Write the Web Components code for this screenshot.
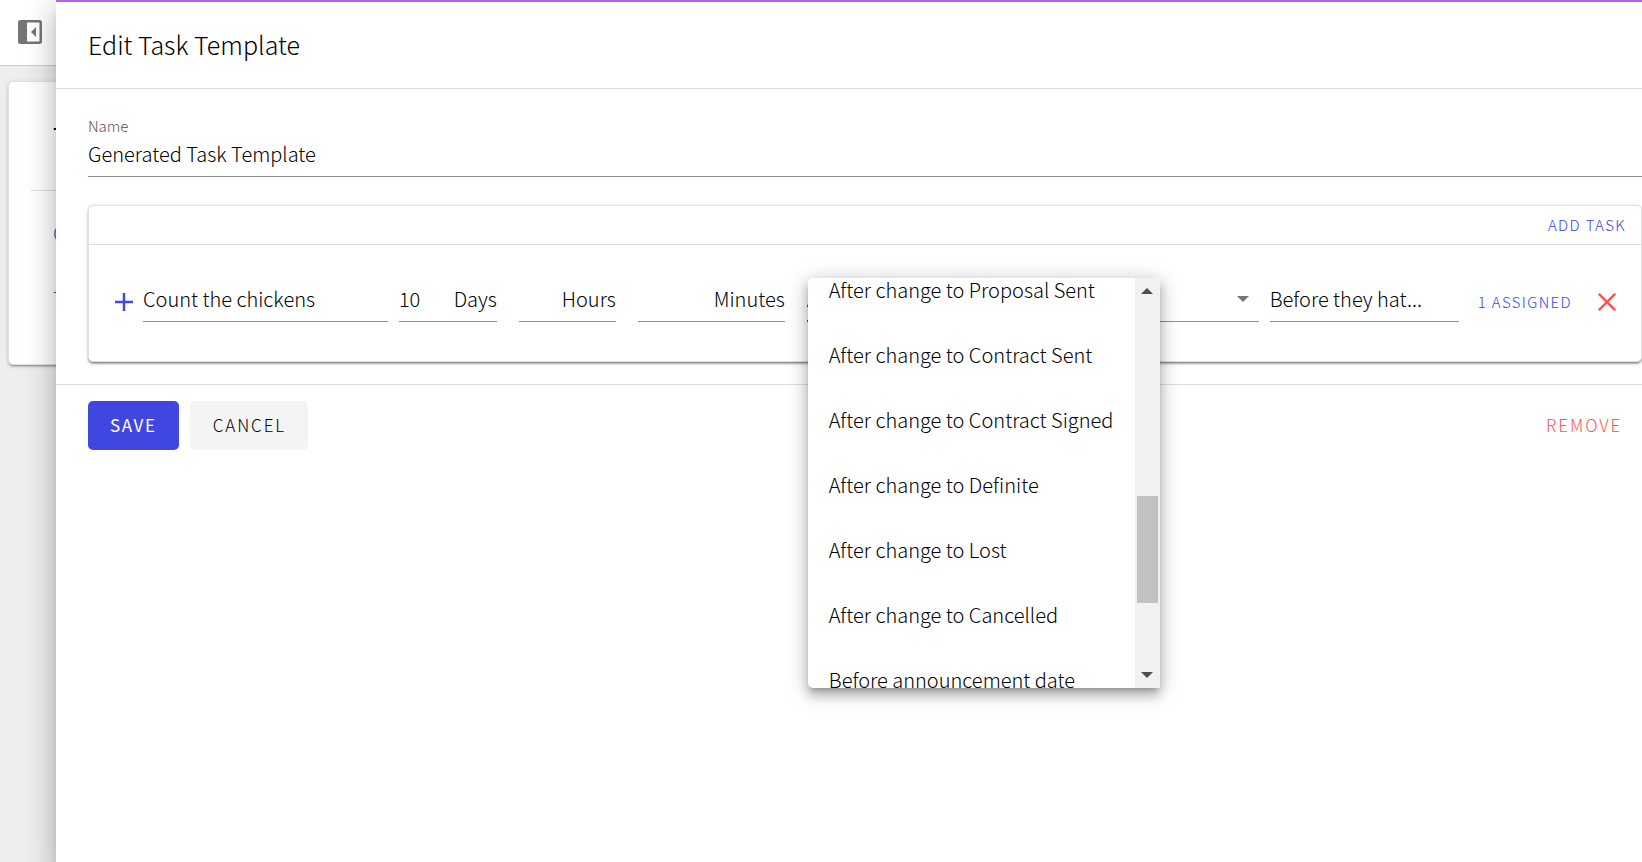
<!DOCTYPE html>
<html lang="en">
<head>
<meta charset="utf-8">
<title>Edit Task Template</title>
<style>
  html, body { height: 100%; }
  body {
    margin: 0;
    overflow: hidden;
    background: #eee;
    color: #000;
    font: 300 20px/28px "Noto Sans CJK SC", "Noto Sans", sans-serif;
    --accent: #4046e0;
    --danger: #ff5252;
    --line: #e0e0e0;
    --underline: #8e8e8e;
  }
</style>
</head>
<body>
<task-app></task-app>

<script>
const define = (name, html, setup) => {
  const template = document.createElement('template');
  template.innerHTML = html;
  customElements.define(name, class extends HTMLElement {
    constructor() {
      super();
      this.attachShadow({ mode: 'open' }).append(template.content.cloneNode(true));
    }
    connectedCallback() {
      if (setup) setup(this, this.shadowRoot);
    }
  });
};

/* Page underneath the drawer */
define('page-behind', `
  <style>
    :host { display: block; height: 100%; }
    header { box-sizing: border-box; height: 66px; padding: 20px 18px; background: #fff; border-bottom: 1px solid #ccc; }
    header button { display: block; width: 24px; height: 24px; padding: 0; border: 0; background: none; }
    svg { display: block; }
    section { margin: 15px 8px; padding-bottom: 51px; background: #fff; border: 1px solid var(--line); border-radius: 5px;
      box-shadow: 0 3px 1px -2px rgba(0,0,0,.2), 0 2px 2px rgba(0,0,0,.14), 0 1px 5px rgba(0,0,0,.12); }
    h2 { margin: 0 22px; padding: 37px 22px; border-bottom: 1px solid var(--line); font-size: 25px; line-height: 34px; font-weight: 400; }
    a { display: block; padding: 28px 44px 0; line-height: 28px; color: var(--accent); text-decoration: none; }
    a + a { padding-top: 38px; }
  </style>
  <header>
    <button aria-label="Collapse sidebar">
      <svg width="24" height="24" viewBox="0 0 24 24"><path fill="#757575" fill-rule="evenodd" d="M2.500 0h19A2.500 2.500 0 0 1 24 2.500v19a2.500 2.500 0 0 1-2.500 2.500h-19A2.500 2.500 0 0 1 0 21.500v-19A2.500 2.500 0 0 1 2.500 0zM9 2.500v19h12.500v-19zM18 7v10l-5-5z"/></svg>
    </button>
  </header>
  <section><h2>T</h2><a href="#g">G</a><a href="#t">T</a></section>
`);

/* Text button: kind = primary | neutral | danger, accent text by default */
define('ui-button', `
  <style>
    :host { display: block; }
    button { display: block; box-sizing: border-box; margin: 0; padding: 0 15px; height: 36px; border: 0; border-radius: 5px; background: none;
      font: inherit; font-size: 15px; line-height: 20px; letter-spacing: .09em; color: var(--accent); white-space: nowrap; }
    :host([large]) button { height: 49px; padding: 0 22px 2px; font-size: 17px; letter-spacing: .11em; }
    :host([kind=primary]) button { background: var(--accent); color: #fff; font-weight: 400; letter-spacing: .1em; }
    :host([kind=neutral]) button { padding-left: 23px; background: #f4f4f4; color: #000; }
    :host([kind=danger]) button { padding: 0 20px 2px; color: var(--danger); }
    :host([flush]) button { padding: 0; }
  </style>
  <button><slot></slot></button>
`);

define('icon-button', `
  <style>
    :host { display: block; }
    button { display: block; width: 18px; height: 18px; padding: 0; border: 0; background: none; color: var(--accent); }
    :host([name=remove]) button { color: var(--danger); }
    svg { display: block; }
  </style>
  <button><svg width="18" height="18" viewBox="0 0 18 18" fill="none" stroke="currentColor" stroke-width="2.500"><path/></svg></button>
`, (host, root) => {
  const remove = host.getAttribute('name') === 'remove';
  root.querySelector('button').setAttribute('aria-label', remove ? 'Remove task' : 'Expand task');
  root.querySelector('path').setAttribute('d', remove ? 'M.8.8l16.400 16.400M17.200.8L.8 17.200' : 'M9 0v18M0 9h18');
});

/* Underlined field with optional label above and suffix */
define('text-field', `
  <style>
    :host { display: block; min-width: 0; }
    .label { display: block; font-size: 15px; line-height: 20px; color: #555; }
    .label:empty { display: none; }
    .box { display: flex; align-items: center; height: 40px; padding-bottom: 2px; border-bottom: 1px solid var(--underline); }
    :host([label]) .box { height: 36px; padding-bottom: 4px; }
    input { flex: 1 1 0; min-width: 0; margin: 0; padding: 0; border: 0; outline: 0; background: none; font: inherit; color: inherit; text-overflow: ellipsis; }
    .suffix:empty { display: none; }
  </style>
  <label class="label" for="field"></label>
  <div class="box"><input id="field" type="text"><label class="suffix" for="field"></label></div>
`, (host, root) => {
  const get = name => host.getAttribute(name) || '';
  root.querySelector('.label').textContent = get('label');
  root.querySelector('.suffix').textContent = get('suffix');
  const input = root.querySelector('input');
  input.value = get('value');
  if (get('hint')) input.setAttribute('aria-label', get('hint'));
});

/* Drop-down with its open menu */
define('select-field', `
  <style>
    :host { display: block; position: relative; min-width: 0; }
    .box { display: flex; align-items: center; height: 40px; padding-bottom: 2px; border-bottom: 1px solid var(--underline); }
    select { appearance: none; flex: 1 1 0; min-width: 0; height: 28px; margin: 0; padding: 0; border: 0; outline: 0; background: none; font: inherit; color: inherit; }
    svg { display: block; flex: none; }
    .box svg { margin-right: 10px; }
    .active { position: absolute; left: 0; bottom: 0; width: 20px; height: 2px; background: var(--accent); }
    .menu { position: absolute; z-index: 1; left: 1px; top: -1px; width: 352px; height: 410px; background: #fff; border-radius: 5px;
      box-shadow: 0 5px 5px -3px rgba(0,0,0,.2), 0 8px 10px 1px rgba(0,0,0,.14), 0 3px 14px 2px rgba(0,0,0,.12), 0 4px 24px 4px rgba(0,0,0,.1); }
    .view { display: flex; height: 100%; overflow: hidden; border-radius: 5px 0 0 5px; }
    ul { flex: 1; min-width: 0; margin: -21px 0 0; padding: 0; list-style: none; }
    li { height: 65px; padding-left: 21px; line-height: 65px; white-space: nowrap; }
    .bar { box-sizing: border-box; display: flex; flex-direction: column; align-items: center; justify-content: space-between; width: 25px; padding: 10px 0; background: #f1f1f1; }
    .thumb { width: 21px; height: 107px; margin-top: 132px; background: #c1c1c1; }
  </style>
  <div class="box">
    <select aria-label="Trigger"><option>After change to Proposal Sent</option></select>
    <svg width="12" height="6" viewBox="0 0 12 6"><path fill="#757575" d="M0 0h12L6 6z"/></svg>
  </div>
  <div class="active"></div>
  <div class="menu">
    <div class="view">
      <ul role="listbox" aria-label="Trigger options"></ul>
      <div class="bar">
        <svg width="12" height="6" viewBox="0 0 12 6"><path fill="#505050" d="M0 6h12L6 0z"/></svg>
        <div class="thumb"></div>
        <svg width="12" height="6" viewBox="0 0 12 6"><path fill="#505050" d="M0 0h12L6 6z"/></svg>
      </div>
    </div>
  </div>
`, (host, root) => {
  const list = root.querySelector('ul');
  for (const text of ['After change to Proposal Sent', 'After change to Contract Sent', 'After change to Contract Signed',
    'After change to Definite', 'After change to Lost', 'After change to Cancelled', 'Before announcement date']) {
    const item = document.createElement('li');
    item.setAttribute('role', 'option');
    item.textContent = text;
    list.append(item);
  }
});

define('task-row', `
  <style>
    :host { display: flex; align-items: center; padding: 34px 25px 39px 26px; }
    .fields { flex: 1; min-width: 0; display: grid; grid-template-columns: 245fr 98fr 108fr 158fr 463fr 189fr; column-gap: 11px; margin: 0 19px 0 10px; }
    .wide { margin-left: 11px; }
    icon-button, ui-button { padding-top: 2px; }
    ui-button { margin-right: 26px; }
  </style>
  <icon-button name="expand"></icon-button>
  <div class="fields">
    <text-field hint="Task name" value="Count the chickens"></text-field>
    <text-field suffix="Days" value="10"></text-field>
    <text-field class="wide" suffix="Hours"></text-field>
    <text-field class="wide" suffix="Minutes"></text-field>
    <select-field class="wide"></select-field>
    <text-field hint="Description" value="Before they hat..."></text-field>
  </div>
  <ui-button flush>1 ASSIGNED</ui-button>
  <icon-button name="remove"></icon-button>
`);

define('task-card', `
  <style>
    :host { display: block; border: 1px solid var(--line); border-radius: 5px; background: #fff;
      box-shadow: 0 3px 1px -2px rgba(0,0,0,.2), 0 2px 2px rgba(0,0,0,.14), 0 1px 5px rgba(0,0,0,.12), 0 2px 2px rgba(0,0,0,.14); }
    header { display: flex; justify-content: flex-end; padding: 1px 0; border-bottom: 1px solid var(--line); }
  </style>
  <header><ui-button>ADD TASK</ui-button></header>
  <slot></slot>
`);

define('edit-drawer', `
  <style>
    :host { display: block; box-sizing: border-box; background: #fff; border-top: 2px solid #b266e2;
      box-shadow: 0 8px 10px -5px rgba(0,0,0,.2), 0 16px 24px 2px rgba(0,0,0,.14), 0 6px 30px 5px rgba(0,0,0,.12); }
    h1 { margin: 0; padding: 25px 32px 27px; border-bottom: 1px solid var(--line); font-size: 25px; line-height: 34px; font-weight: 300; }
    main { padding: 27px 0 22px 32px; }
    task-card { margin-top: 28px; }
    footer { display: flex; gap: 11px; padding: 16px 0 0 32px; border-top: 1px solid var(--line); }
    .end { margin-left: auto; }
  </style>
  <h1>Edit Task Template</h1>
  <main>
    <text-field label="Name" value="Generated Task Template"></text-field>
    <task-card><task-row></task-row></task-card>
  </main>
  <footer>
    <ui-button large kind="primary">SAVE</ui-button>
    <ui-button large kind="neutral">CANCEL</ui-button>
    <ui-button class="end" large kind="danger">REMOVE</ui-button>
  </footer>
`);

define('task-app', `
  <style>
    :host { display: grid; grid-template-columns: 56px 1fr; height: 100vh; }
    page-behind { grid-area: 1 / 1 / 2 / 3; }
    edit-drawer { grid-area: 1 / 2; z-index: 1; min-width: 0; }
  </style>
  <page-behind></page-behind>
  <edit-drawer></edit-drawer>
`);
</script>
</body>
</html>
